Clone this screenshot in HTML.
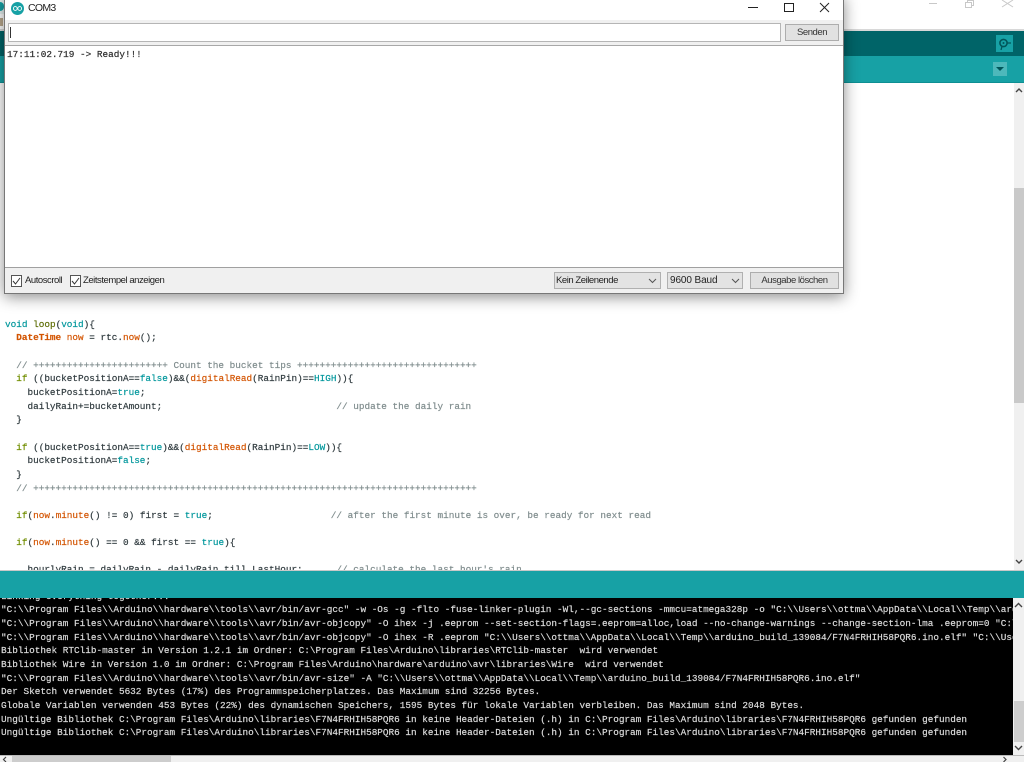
<!DOCTYPE html>
<html><head><meta charset="utf-8">
<style>
html,body{margin:0;padding:0;width:1024px;height:762px;overflow:hidden;background:#fff}
*{box-sizing:border-box}
.a{position:absolute}
.l{position:absolute;white-space:pre;font:9.375px/13px "Liberation Mono",monospace;color:#2f3a3e;-webkit-text-stroke:.18px currentColor}
.k{color:#00979c}.f{color:#d35400}.c{color:#7f8c8d}.y{color:#728e00}.p{color:#5e6d03}
.s{font-family:"Liberation Sans",sans-serif;font-size:9.5px;letter-spacing:-.45px;line-height:13px;color:#222;position:absolute;white-space:pre}
.b{position:absolute;background:#e1e1e1;border:1px solid #adadad;font:9.5px/18px "Liberation Sans",sans-serif;letter-spacing:-.45px;color:#222;text-align:center}
.o{color:#dcdcdc}
#root{position:relative;width:1024px;height:762px;overflow:hidden;filter:blur(.35px)}
</style></head><body><div id="root">
<!-- back window -->
<div class="a" style="left:0;top:29px;width:1024px;height:2px;background:#d8d8d8"></div>
<div class="a" style="left:0;top:31px;width:1024px;height:25px;background:#006468"></div>
<div class="a" style="left:0;top:56px;width:1024px;height:26px;background:#17a1a5"></div>
<div class="a" style="left:0;top:82px;width:1024px;height:1px;background:#0e8f93"></div>
<div class="a" style="left:996px;top:35px;width:17px;height:17px;background:#17a1a5"></div>
<svg class="a" style="left:996px;top:35px" width="17" height="17" viewBox="0 0 17 17"><circle cx="7.500" cy="8" r="3.600" fill="none" stroke="#00565a" stroke-width="1.600"/><circle cx="7.500" cy="8" r="1" fill="#00565a"/><path d="M6 11.500L5 15M11.500 8H15" stroke="#00565a" stroke-width="1.300"/></svg>
<div class="a" style="left:993px;top:62px;width:14px;height:14px;background:#4db8bb"></div>
<div class="a" style="left:996px;top:67px;width:0;height:0;border-left:4px solid transparent;border-right:4px solid transparent;border-top:4px solid #00565a"></div>
<svg class="a" style="left:914px;top:0" width="110" height="10"><path d="M15 3.500H23" stroke="#c8c8c8"/><path d="M51.500 2.500H57.500V7.500H51.500ZM53.500 2.500V.5H59.500V5.500H57.500" fill="none" stroke="#c8c8c8"/><path d="M88 0L99 7M99 0L88 7" stroke="#c8c8c8"/></svg>
<!-- left edge of back window -->
<div class="a" style="left:0;top:0;width:5px;height:14px;background:#e6f0f0"></div>
<div class="a" style="left:0;top:2px;width:4px;height:9px;border-radius:0 5px 5px 0;background:#17a1a5"></div>
<div class="a" style="left:0;top:18px;width:3px;height:8px;background:#b9a98e"></div>
<!-- code area -->
<div class="l" style="left:5px;top:318px"><span class="k">void</span> <span class="p">loop</span>(<span class="k">void</span>){</div>
<div class="l" style="left:5px;top:331px">  <span class="f"><b>DateTime</b></span> <span class="f">now</span> = rtc.<span class="f">now</span>();</div>
<div class="l" style="left:5px;top:359px"><span class="c">  // ++++++++++++++++++++++++ Count the bucket tips ++++++++++++++++++++++++++++++++</span></div>
<div class="l" style="left:5px;top:372px">  <span class="y">if</span> ((bucketPositionA==<span class="k">false</span>)&amp;&amp;(<span class="f">digitalRead</span>(RainPin)==<span class="k">HIGH</span>)){</div>
<div class="l" style="left:5px;top:386px">    bucketPositionA=<span class="k">true</span>;</div>
<div class="l" style="left:5px;top:400px">    dailyRain+=bucketAmount;<span class="c">                               // update the daily rain</span></div>
<div class="l" style="left:5px;top:413px">  }</div>
<div class="l" style="left:5px;top:441px">  <span class="y">if</span> ((bucketPositionA==<span class="k">true</span>)&amp;&amp;(<span class="f">digitalRead</span>(RainPin)==<span class="k">LOW</span>)){</div>
<div class="l" style="left:5px;top:454px">    bucketPositionA=<span class="k">false</span>;</div>
<div class="l" style="left:5px;top:468px">  }</div>
<div class="l" style="left:5px;top:482px"><span class="c">  // +++++++++++++++++++++++++++++++++++++++++++++++++++++++++++++++++++++++++++++++</span></div>
<div class="l" style="left:5px;top:509px">  <span class="y">if</span>(<span class="f">now</span>.<span class="f">minute</span>() != 0) first = <span class="k">true</span>;<span class="c">                     // after the first minute is over, be ready for next read</span></div>
<div class="l" style="left:5px;top:536px">  <span class="y">if</span>(<span class="f">now</span>.<span class="f">minute</span>() == 0 &amp;&amp; first == <span class="k">true</span>){</div>
<div class="l" style="left:5px;top:563px">    hourlyRain = dailyRain - dailyRain_till_LastHour;      <span class="c">// calculate the last hour's rain</span></div>
<!-- code scrollbar -->
<div class="a" style="left:1014px;top:83px;width:10px;height:487px;background:#f0f0f0"></div>
<div class="a" style="left:1014px;top:188px;width:10px;height:215px;background:#c9c9c9"></div>
<svg class="a" style="left:1014px;top:83px" width="10" height="487"><path d="M2 9L5 6L8 9M2 477L5 480L8 477" fill="none" stroke="#444" stroke-width="1.400"/></svg>
<!-- status -->
<div class="a" style="left:0;top:570px;width:1024px;height:1px;background:#c8c8c8"></div>
<div class="a" style="left:0;top:571px;width:1024px;height:27px;background:#17a1a5"></div>
<!-- console -->
<div class="a" id="con" style="left:0;top:598px;width:1013px;height:157px;background:#000;overflow:hidden">
<div class="l o" style="left:1px;top:-8px">Linking everything together...</div>
<div class="l o" style="left:1px;top:5px">"C:\\Program Files\\Arduino\\hardware\\tools\\avr/bin/avr-gcc" -w -Os -g -flto -fuse-linker-plugin -Wl,--gc-sections -mmcu=atmega328p -o "C:\\Users\\ottma\\AppData\\Local\\Temp\\arduino_build_139084/F7N4FRHIH58PQR6.ino.elf"</div>
<div class="l o" style="left:1px;top:19px">"C:\\Program Files\\Arduino\\hardware\\tools\\avr/bin/avr-objcopy" -O ihex -j .eeprom --set-section-flags=.eeprom=alloc,load --no-change-warnings --change-section-lma .eeprom=0 "C:\\Users</div>
<div class="l o" style="left:1px;top:33px">"C:\\Program Files\\Arduino\\hardware\\tools\\avr/bin/avr-objcopy" -O ihex -R .eeprom "C:\\Users\\ottma\\AppData\\Local\\Temp\\arduino_build_139084/F7N4FRHIH58PQR6.ino.elf" "C:\\Users\\ottma</div>
<div class="l o" style="left:1px;top:46px">Bibliothek RTClib-master in Version 1.2.1 im Ordner: C:\Program Files\Arduino\libraries\RTClib-master  wird verwendet</div>
<div class="l o" style="left:1px;top:60px">Bibliothek Wire in Version 1.0 im Ordner: C:\Program Files\Arduino\hardware\arduino\avr\libraries\Wire  wird verwendet</div>
<div class="l o" style="left:1px;top:74px">"C:\\Program Files\\Arduino\\hardware\\tools\\avr/bin/avr-size" -A "C:\\Users\\ottma\\AppData\\Local\\Temp\\arduino_build_139084/F7N4FRHIH58PQR6.ino.elf"</div>
<div class="l o" style="left:1px;top:87px">Der Sketch verwendet 5632 Bytes (17%) des Programmspeicherplatzes. Das Maximum sind 32256 Bytes.</div>
<div class="l o" style="left:1px;top:101px">Globale Variablen verwenden 453 Bytes (22%) des dynamischen Speichers, 1595 Bytes für lokale Variablen verbleiben. Das Maximum sind 2048 Bytes.</div>
<div class="l o" style="left:1px;top:115px">Ungültige Bibliothek C:\Program Files\Arduino\libraries\F7N4FRHIH58PQR6 in keine Header-Dateien (.h) in C:\Program Files\Arduino\libraries\F7N4FRHIH58PQR6 gefunden gefunden</div>
<div class="l o" style="left:1px;top:128px">Ungültige Bibliothek C:\Program Files\Arduino\libraries\F7N4FRHIH58PQR6 in keine Header-Dateien (.h) in C:\Program Files\Arduino\libraries\F7N4FRHIH58PQR6 gefunden gefunden</div>
</div>
<!-- console scrollbars -->
<div class="a" style="left:1013px;top:598px;width:11px;height:157px;background:#f0f0f0"></div>
<div class="a" style="left:1014px;top:701px;width:10px;height:41px;background:#cdcdcd"></div>
<svg class="a" style="left:1013px;top:598px" width="11" height="157"><path d="M2 9L5.500 5.500L9 9M2 148L5.500 151.500L9 148" fill="none" stroke="#444" stroke-width="1.400"/></svg>
<div class="a" style="left:0;top:755px;width:1024px;height:7px;background:#f0f0f0;border-top:1px solid #bbb"></div>
<div class="a" style="left:12px;top:756px;width:159px;height:6px;background:#cdcdcd"></div>
<svg class="a" style="left:0;top:756px" width="10" height="6"><path d="M6 1L3.500 3.500L6 6" fill="none" stroke="#444" stroke-width="1.200"/></svg>
<svg class="a" style="left:1000px;top:756px" width="10" height="6"><path d="M3.500 1L6 3.500L3.500 6" fill="none" stroke="#444" stroke-width="1.200"/></svg>

<!-- serial monitor shadow + window -->
<div class="a" style="left:4px;top:-5px;width:840px;height:299px;background:#f0f0f0;border:1px solid #777;box-shadow:0 3px 14px rgba(0,0,0,.45)"></div>
<div class="a" style="left:5px;top:0;width:838px;height:20px;background:#fff"></div>
<svg class="a" style="left:11px;top:2px" width="13" height="13" viewBox="0 0 13 13"><circle cx="6.500" cy="6.500" r="6.500" fill="#17a1a5"/><circle cx="4.300" cy="6.500" r="1.900" fill="none" stroke="#fff" stroke-width=".9"/><circle cx="8.700" cy="6.500" r="1.900" fill="none" stroke="#fff" stroke-width=".9"/></svg>
<div class="a" style="left:28px;top:1px;font:10.500px/15px 'Liberation Sans',sans-serif;letter-spacing:-.7px;color:#222">COM3</div>
<svg class="a" style="left:740px;top:0" width="100" height="16"><path d="M8 7.500H18" stroke="#222"/><path d="M44.500 3.500H53.500V11.500H44.500Z" fill="none" stroke="#222" stroke-width="1"/><path d="M80 3L89 12M89 3L80 12" stroke="#222"/></svg>
<!-- input -->
<div class="a" style="left:8px;top:23px;width:773px;height:19px;background:#fff;border:1px solid #b5b5b5"></div>
<div class="a" style="left:10px;top:27px;width:1px;height:11px;background:#333"></div>
<div class="b" style="left:785px;top:24px;width:54px;height:17px;line-height:15px;color:#333">Senden</div>
<!-- output -->
<div class="a" style="left:5px;top:45px;width:838px;height:223px;background:#fff;border-top:1px solid #a8a8a8;border-bottom:1px solid #a0a0a0"></div>
<div class="l" style="left:7px;top:48px;color:#2a2a2a">17:11:02.719 -&gt; Ready!!!</div>
<!-- footer -->
<div class="a" style="left:11px;top:275px;width:11px;height:12px;background:#fff;border:1px solid #555"></div>
<svg class="a" style="left:11px;top:275px" width="11" height="12"><path d="M2 6L4.500 9L9 3" fill="none" stroke="#333" stroke-width="1"/></svg>
<div class="s" style="left:25px;top:274px">Autoscroll</div>
<div class="a" style="left:70px;top:275px;width:11px;height:12px;background:#fff;border:1px solid #555"></div>
<svg class="a" style="left:70px;top:275px" width="11" height="12"><path d="M2 6L4.500 9L9 3" fill="none" stroke="#333" stroke-width="1"/></svg>
<div class="s" style="left:83px;top:274px">Zeitstempel anzeigen</div>
<div class="a" style="left:554px;top:272px;width:107px;height:17px;background:#e3e3e3;border:1px solid #b0b0b0"></div>
<div class="s" style="left:556px;top:274px">Kein Zeilenende</div>
<svg class="a" style="left:648px;top:278px" width="10" height="6"><path d="M1 1L4.500 4.500L8 1" fill="none" stroke="#555"/></svg>
<div class="a" style="left:667px;top:272px;width:76px;height:17px;background:#e3e3e3;border:1px solid #b0b0b0"></div>
<div class="s" style="left:670px;top:274px;font-size:10px;letter-spacing:-.1px">9600 Baud</div>
<svg class="a" style="left:731px;top:278px" width="10" height="6"><path d="M1 1L4.500 4.500L8 1" fill="none" stroke="#555"/></svg>
<div class="b" style="left:750px;top:272px;width:89px;height:17px;line-height:15px;color:#333">Ausgabe löschen</div>
</div></body></html>
